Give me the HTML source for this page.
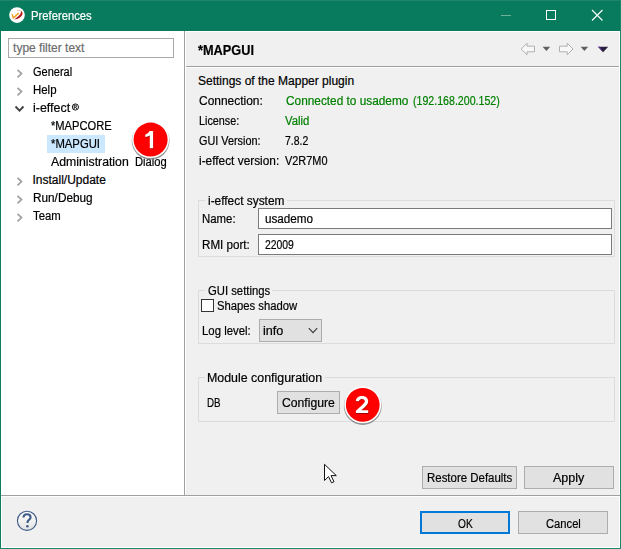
<!DOCTYPE html>
<html><head><meta charset="utf-8"><style>
*{margin:0;padding:0;box-sizing:border-box}
html,body{width:621px;height:549px;overflow:hidden;background:#f0f0f0}
body{position:relative;font-family:"Liberation Sans",sans-serif;font-size:12px}
.a{position:absolute}
.t{position:absolute;white-space:nowrap;line-height:12px;height:14px;transform-origin:0 0;-webkit-text-stroke:0.2px currentColor}
</style></head><body>
<div class="a" style="left:0;top:0;width:621px;height:549px;background:#087a5d"></div>
<div class="a" style="left:0;top:0;width:621px;height:1px;background:#20846c"></div>
<div class="a" style="left:620px;top:0;width:1px;height:549px;background:#198868"></div>
<div class="a" style="left:0;top:548px;width:621px;height:1px;background:#198868"></div>
<div class="a" style="left:0;top:31px;width:1px;height:518px;background:#0e7e5f"></div>
<div class="a" style="left:1px;top:31px;width:619px;height:517px;background:#fff"></div>
<div class="a" style="left:2px;top:32px;width:617px;height:515px;background:#f0f0f0"></div>
<div class="a" style="left:1px;top:31px;width:183px;height:464px;background:#fff"></div>
<div class="a" style="left:184px;top:31px;width:1px;height:465px;background:#a0a0a0"></div>
<div class="a" style="left:185px;top:31px;width:1px;height:465px;background:#fff"></div>
<div class="a" style="left:1px;top:495px;width:619px;height:1px;background:#a0a0a0"></div>
<div class="a" style="left:1px;top:496px;width:619px;height:1px;background:#fff"></div>
<div class="a" style="left:186px;top:66px;width:433px;height:1px;background:#a0a0a0"></div>
<div class="a" style="left:186px;top:67px;width:433px;height:1px;background:#fff"></div>
<div class="a" style="left:8px;top:38px;width:166px;height:20px;border:1px solid #a9a9a9;background:#fff"></div>
<div class="a" style="left:47px;top:135px;width:58px;height:18px;background:#cce8ff"></div>
<div class="a" style="left:198px;top:200px;width:417px;height:57px;border:1px solid #dcdcdc"></div>
<div class="a" style="left:205px;top:199px;width:82px;height:3px;background:#f0f0f0"></div>
<div class="a" style="left:198px;top:290px;width:417px;height:54px;border:1px solid #dcdcdc"></div>
<div class="a" style="left:205px;top:289px;width:67px;height:3px;background:#f0f0f0"></div>
<div class="a" style="left:198px;top:377px;width:417px;height:45px;border:1px solid #dcdcdc"></div>
<div class="a" style="left:205px;top:376px;width:120px;height:3px;background:#f0f0f0"></div>
<div class="a" style="left:258px;top:208px;width:354px;height:21px;border:1px solid #7a7a7a;background:#fff"></div>
<div class="a" style="left:258px;top:234px;width:354px;height:21px;border:1px solid #7a7a7a;background:#fff"></div>
<div class="a" style="left:201px;top:299px;width:13px;height:13px;border:1px solid #333;background:#fff"></div>
<div class="a" style="left:259px;top:319px;width:63px;height:23px;border:1px solid #adadad;background:#e1e1e1"></div>
<div class="a" style="left:277px;top:391px;width:63px;height:23px;border:1px solid #adadad;background:#e1e1e1"></div>
<div class="a" style="left:422px;top:466px;width:95px;height:23px;border:1px solid #adadad;background:#e1e1e1"></div>
<div class="a" style="left:524px;top:466px;width:90px;height:23px;border:1px solid #adadad;background:#e1e1e1"></div>
<div class="a" style="left:420px;top:511px;width:90px;height:23px;border:2px solid #0078d7;background:#e1e1e1"></div>
<div class="a" style="left:518px;top:511px;width:90px;height:23px;border:1px solid #adadad;background:#e1e1e1"></div>
<div class="t" style="left:30.50px;top:10px;color:#fff;transform:scaleX(0.9382);">Preferences</div>
<div class="t" style="left:13.10px;top:42px;color:#6d6d6d;">type filter text</div>
<div class="t" style="left:32.50px;top:66px;color:#000;transform:scaleX(0.9157);">General</div>
<div class="t" style="left:32.60px;top:84px;color:#000;transform:scaleX(0.9514);">Help</div>
<div class="t" style="left:32.50px;top:102px;color:#000;transform:scaleX(1.0363);">i-effect</div>
<div class="t" style="left:32.50px;top:174px;color:#000;">Install/Update</div>
<div class="t" style="left:32.50px;top:192px;color:#000;transform:scaleX(0.9819);">Run/Debug</div>
<div class="t" style="left:32.50px;top:210px;color:#000;transform:scaleX(0.9454);">Team</div>
<div class="t" style="left:51.20px;top:120px;color:#000;transform:scaleX(0.9280);">*MAPCORE</div>
<div class="t" style="left:51.30px;top:138px;color:#000;transform:scaleX(0.9423);">*MAPGUI</div>
<div class="t" style="left:51.00px;top:156px;color:#000;transform:scaleX(1.0224);">Administration</div>
<div class="t" style="left:134.50px;top:156px;color:#000;transform:scaleX(0.9353);">Dialog</div>
<div class="t" style="left:198.40px;top:44px;color:#000;font-weight:bold;font-size:14px;transform:scaleX(0.9121);">*MAPGUI</div>
<div class="t" style="left:198.00px;top:75px;color:#000;">Settings of the Mapper plugin</div>
<div class="t" style="left:198.50px;top:95px;color:#000;transform:scaleX(0.9969);">Connection:</div>
<div class="t" style="left:285.70px;top:95px;color:#008000;transform:scaleX(0.9863);">Connected to usademo</div>
<div class="t" style="left:412.90px;top:95px;color:#008000;transform:scaleX(0.8848);">(192.168.200.152)</div>
<div class="t" style="left:198.60px;top:115px;color:#000;transform:scaleX(0.9016);">License:</div>
<div class="t" style="left:285.30px;top:115px;color:#008000;transform:scaleX(0.9457);">Valid</div>
<div class="t" style="left:198.60px;top:135px;color:#000;transform:scaleX(0.9044);">GUI Version:</div>
<div class="t" style="left:285.30px;top:135px;color:#000;transform:scaleX(0.8689);">7.8.2</div>
<div class="t" style="left:198.50px;top:155px;color:#000;transform:scaleX(0.9889);">i-effect version:</div>
<div class="t" style="left:285.30px;top:155px;color:#000;transform:scaleX(0.9101);">V2R7M0</div>
<div class="t" style="left:207.60px;top:195px;color:#000;transform:scaleX(0.9909);">i-effect system</div>
<div class="t" style="left:201.70px;top:213px;color:#000;transform:scaleX(0.9490);">Name:</div>
<div class="t" style="left:201.70px;top:239px;color:#000;transform:scaleX(0.9675);">RMI port:</div>
<div class="t" style="left:264.50px;top:213px;color:#000;transform:scaleX(0.9737);">usademo</div>
<div class="t" style="left:264.50px;top:239px;color:#000;transform:scaleX(0.8653);">22009</div>
<div class="t" style="left:207.60px;top:285px;color:#000;transform:scaleX(0.9409);">GUI settings</div>
<div class="t" style="left:217.40px;top:300px;color:#000;transform:scaleX(0.9391);">Shapes shadow</div>
<div class="t" style="left:201.70px;top:325px;color:#000;transform:scaleX(0.9494);">Log level:</div>
<div class="t" style="left:263.00px;top:325px;color:#000;transform:scaleX(1.0518);">info</div>
<div class="t" style="left:207.40px;top:372px;color:#000;transform:scaleX(1.0332);">Module configuration</div>
<div class="t" style="left:206.80px;top:397px;color:#000;transform:scaleX(0.8144);">DB</div>
<div class="t" style="left:282.20px;top:397px;color:#000;transform:scaleX(1.0154);">Configure</div>
<div class="t" style="left:427.10px;top:472px;color:#000;transform:scaleX(0.9541);">Restore Defaults</div>
<div class="t" style="left:553.00px;top:472px;color:#000;transform:scaleX(1.0433);">Apply</div>
<div class="t" style="left:457.90px;top:518px;color:#000;transform:scaleX(0.8439);">OK</div>
<div class="t" style="left:545.80px;top:518px;color:#000;transform:scaleX(0.9332);">Cancel</div>
<svg class="a" style="left:0;top:0" width="621" height="549" viewBox="0 0 621 549">
<defs>
<linearGradient id="hg" x1="0" y1="0" x2="0" y2="1"><stop offset="0" stop-color="#ffffff"/><stop offset="1" stop-color="#e2e2e2"/></linearGradient>
<filter id="sh" x="-30%" y="-30%" width="160%" height="160%"><feGaussianBlur stdDeviation="0.7"/></filter>
<filter id="ds" x="-30%" y="-30%" width="160%" height="160%"><feGaussianBlur stdDeviation="0.5"/></filter>
</defs>
<!-- app icon -->
<circle cx="17" cy="15.1" r="7.8" fill="#fff"/>
<path d="M14.2,19.6 C18,19.3 21.9,17.1 22.5,13.8 C22.7,12.4 22.1,11.3 21,10.9 C21.1,12.7 20.3,14.6 18.5,16.1 C17.2,17.2 15.7,18.3 14.2,19.6 Z" fill="#b51a1a"/>
<path d="M17.2,10.5 C18.6,10.1 20,10.4 20.9,11" stroke="#eab0b0" stroke-width="0.9" fill="none"/>
<path d="M12.3,14.6 L13.3,18 C15,16.6 16.8,14.8 18.4,13.4" stroke="#f0a020" stroke-width="1.4" fill="none" stroke-linecap="round" stroke-linejoin="round"/>
<!-- window controls -->
<rect x="501" y="15" width="10" height="1" fill="#6fb09a"/>
<rect x="546.5" y="10.5" width="9" height="9" fill="none" stroke="#fff" stroke-width="1"/>
<path d="M592,10 L602.5,20.5 M602.5,10 L592,20.5" stroke="#fff" stroke-width="1.1"/>
<!-- tree chevrons -->
<path d="M17.5,69.8 L21.5,73.6 L17.5,77.4" stroke="#a0a0a0" stroke-width="1.7" fill="none"/>
<path d="M17.5,87.8 L21.5,91.6 L17.5,95.4" stroke="#a0a0a0" stroke-width="1.7" fill="none"/>
<path d="M17.5,177.8 L21.5,181.6 L17.5,185.4" stroke="#a0a0a0" stroke-width="1.7" fill="none"/>
<path d="M17.5,195.8 L21.5,199.6 L17.5,203.4" stroke="#a0a0a0" stroke-width="1.7" fill="none"/>
<path d="M17.5,213.8 L21.5,217.6 L17.5,221.4" stroke="#a0a0a0" stroke-width="1.7" fill="none"/>

<path d="M15.5,106.5 L19.5,110.6 L23.5,106.5" stroke="#404040" stroke-width="1.8" fill="none"/>
<!-- registered mark -->
<circle cx="75.4" cy="107" r="3.1" fill="none" stroke="#000" stroke-width="0.9"/>
<path d="M74.2,109 L74.2,105.2 L75.8,105.2 C76.8,105.2 76.8,107.1 75.8,107.1 L74.2,107.1 M75.6,107.1 L76.8,109" stroke="#000" stroke-width="0.8" fill="none"/>
<!-- toolbar -->
<path d="M521.2,49 L527,43.2 L527,46.2 L534.5,46.2 L534.5,51.8 L527,51.8 L527,54.8 Z" fill="#f8f8f8" stroke="#a8a8a8" stroke-width="0.9" stroke-linejoin="round"/>
<path d="M542.6,46.8 L550.2,46.8 L546.4,51 Z" fill="#606060"/>
<path d="M573,49 L567.2,43.2 L567.2,46.2 L559.5,46.2 L559.5,51.8 L567.2,51.8 L567.2,54.8 Z" fill="#f8f8f8" stroke="#a8a8a8" stroke-width="0.9" stroke-linejoin="round"/>
<path d="M580.6,46.8 L588.2,46.8 L584.4,51 Z" fill="#606060"/>
<path d="M598,46.8 L608.2,46.8 L603.1,52.2 Z" fill="#2a1f3a"/>
<path d="M598,46.8 L600,46.8 L603.1,52.2 Z" fill="#5a2e9a"/>
<!-- combo chevron -->
<path d="M308.8,328.2 L313,332.6 L317.2,328.2" stroke="#383838" stroke-width="1.1" fill="none"/>
<!-- help icon -->
<circle cx="27" cy="520.8" r="9.6" fill="url(#hg)" stroke="#3f5b87" stroke-width="1.1"/>
<path d="M23.4,517.5 C23.6,515 25.3,514.2 27,514.2 C29.2,514.2 30.6,515.4 30.6,517.2 C30.6,519.4 28,519.8 27.6,521.8 L27.5,523" stroke="#3f5b87" stroke-width="2.1" fill="none"/>
<circle cx="27.4" cy="526.2" r="1.3" fill="#3f5b87"/>
<!-- badges -->
<circle cx="150.6" cy="140.8" r="18.9" fill="#808080" opacity="0.85" filter="url(#sh)"/>
<circle cx="150.6" cy="139.6" r="18.5" fill="#fff"/>
<circle cx="150.6" cy="139.6" r="17" fill="#f00"/>
<circle cx="362.75" cy="406" r="18.9" fill="#808080" opacity="0.85" filter="url(#sh)"/>
<circle cx="362.75" cy="404.8" r="18.5" fill="#fff"/>
<circle cx="362.75" cy="404.8" r="16.9" fill="#f00"/>
<g filter="url(#ds)" opacity="0.6" transform="translate(0.3,0.8)">
<path d="M149.6,131.1 L153.1,131.1 L153.1,148.2 L149.8,148.2 L149.8,135.6 C148.5,136.3 147,136.8 145.3,137 L145.3,134.6 C147,134.1 148.6,132.9 149.6,131.1 Z" fill="#600"/>
<path d="M355.9,400.9 C356.2,397.9 358.6,396 362,396 C365.9,396 368.2,398.2 368.2,401.3 C368.2,403.6 367,405.2 364.5,407.4 L361.3,410.2 L368.2,410.2 L368.2,413.1 L355.9,413.1 L355.9,410.7 L362.2,404.9 C364,403.3 364.8,402.4 364.8,401.3 C364.8,399.8 363.7,398.9 362,398.9 C360.2,398.9 359.1,399.8 358.9,401.3 Z" fill="#600"/>
</g>
<path d="M149.6,131.1 L153.1,131.1 L153.1,148.2 L149.8,148.2 L149.8,135.6 C148.5,136.3 147,136.8 145.3,137 L145.3,134.6 C147,134.1 148.6,132.9 149.6,131.1 Z" fill="#fff"/>
<path d="M355.9,400.9 C356.2,397.9 358.6,396 362,396 C365.9,396 368.2,398.2 368.2,401.3 C368.2,403.6 367,405.2 364.5,407.4 L361.3,410.2 L368.2,410.2 L368.2,413.1 L355.9,413.1 L355.9,410.7 L362.2,404.9 C364,403.3 364.8,402.4 364.8,401.3 C364.8,399.8 363.7,398.9 362,398.9 C360.2,398.9 359.1,399.8 358.9,401.3 Z" fill="#fff"/>
<!-- cursor -->
<path d="M324.5,464.3 L324.5,480.5 L328.5,476.6 L331.5,482.8 L334,481.7 L331,475.6 L336.3,475.6 Z" fill="#fff" stroke="#111" stroke-width="1" stroke-linejoin="round"/>
</svg>

</body></html>
